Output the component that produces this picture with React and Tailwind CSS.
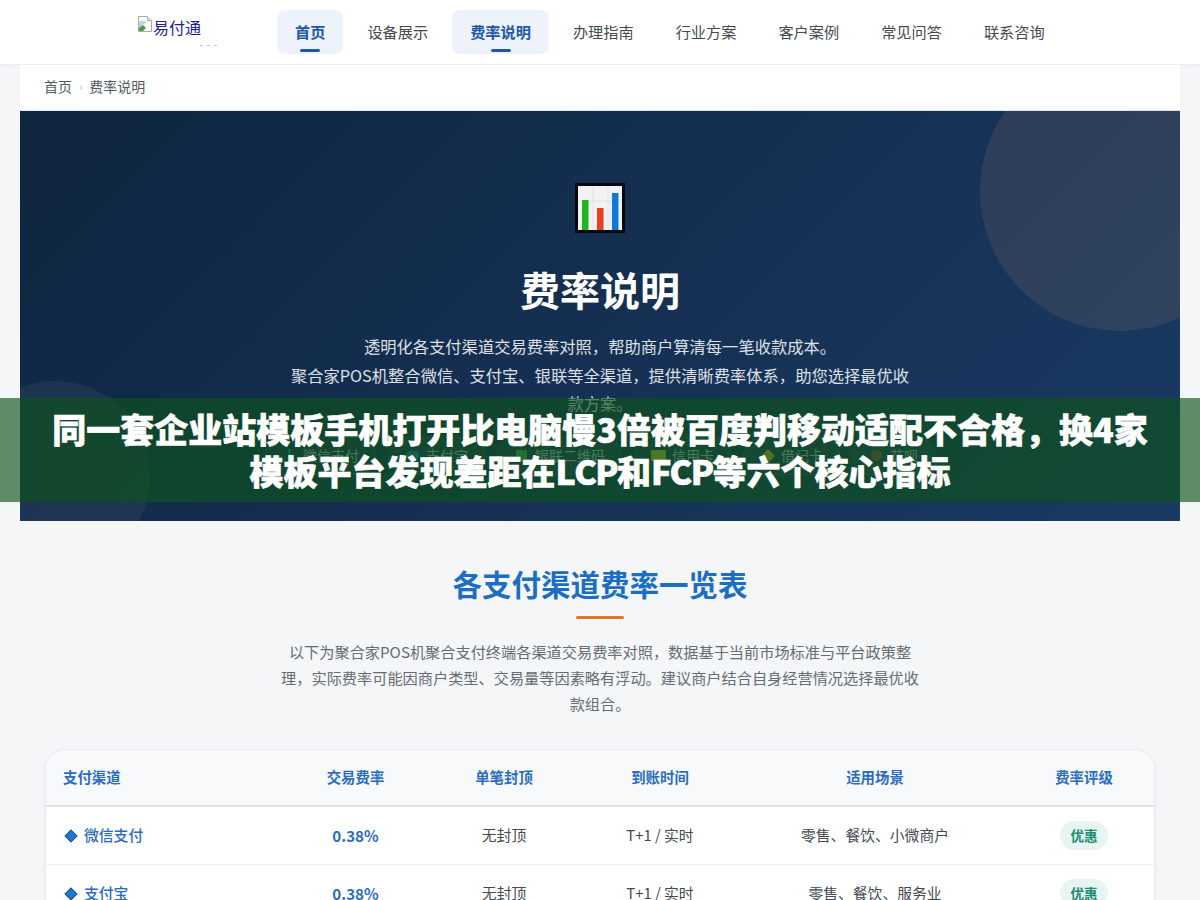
import { Heart } from 'lucide-react';

const font = '[font-family:"Noto_Sans_CJK_SC","Liberation_Sans",sans-serif]';

const navItems = [
  { label: '首页', active: true },
  { label: '设备展示' },
  { label: '费率说明', active: true },
  { label: '办理指南' },
  { label: '行业方案' },
  { label: '客户案例' },
  { label: '常见问答' },
  { label: '联系咨询' },
];

const rows = [
  { name: '微信支付', rate: '0.38%', cap: '无封顶', time: 'T+1 / 实时', scene: '零售、餐饮、小微商户', level: '优惠' },
  { name: '支付宝', rate: '0.38%', cap: '无封顶', time: 'T+1 / 实时', scene: '零售、餐饮、服务业', level: '优惠' },
];

const columns = ['支付渠道', '交易费率', '单笔封顶', '到账时间', '适用场景', '费率评级'];
const gridCols = 'grid grid-cols-[236px_147px_150px_162px_268px_150px]';

function BrokenImage() {
  return (
    <svg width="16" height="18" viewBox="0 0 16 18" className="shrink-0">
      <path d="M1.5 1.5h9l4 4v11h-13z" fill="#fff" stroke="#a9a9a9" />
      <path d="M10.5 1.5v4h4" fill="#e8e8e8" stroke="#a9a9a9" />
      <path d="M2 7c2-2 5-2 7 0l-6 6-1 0z" fill="#bcd4ee" />
      <path d="M2 16v-3l4-3 3 3-3 3z" fill="#4f9a3f" />
    </svg>
  );
}

function ChartIcon() {
  return (
    <svg width="50" height="50" viewBox="0 0 50 50">
      <rect width="50" height="50" fill="#05070c" />
      <rect x="3" y="3" width="44" height="44" fill="#f2f2f4" />
      <path d="M3 18h44M3 33h44M18 3v44M33 3v44" stroke="#e2e2e6" strokeWidth="1" />
      <rect x="7" y="17" width="6.5" height="30" fill="#22b51e" />
      <rect x="22" y="25" width="6.5" height="22" fill="#e8401c" />
      <rect x="37" y="10" width="6.5" height="37" fill="#0f78d8" />
    </svg>
  );
}

function Chip({ icon, children }) {
  return (
    <span className="flex items-center gap-[6px] h-[38px] px-4 rounded-full border border-white/10 bg-white/[0.04] text-[14px] text-white/70">
      <span className="w-[15px] flex justify-center">{icon}</span>
      {children}
    </span>
  );
}

export default function App() {
  return (
    <div className={`relative h-[900px] overflow-hidden bg-[#f4f6f8] ${font}`}>
      {/* Header */}
      <header className="h-[65px] bg-white border-b border-[#eceef1] shadow-[0_1px_4px_rgba(0,0,0,0.04)] flex items-start">
        <div className="w-[277px] shrink-0 pl-[137px] pt-[15px]">
          <div className="flex items-start text-[16px] leading-[24px] text-[#1f1f9a]">
            <BrokenImage />
            <span>易付通</span>
          </div>
          <div className="ml-[63px] mt-[6px] flex gap-[4px]">
            <span className="w-[3px] h-px bg-[#c4c8cc]" />
            <span className="w-[3px] h-px bg-[#c4c8cc]" />
            <span className="w-[3px] h-px bg-[#c4c8cc]" />
          </div>
        </div>
        <nav className="flex gap-[6px] pt-[10px]">
          {navItems.map((item) => (
            <a
              key={item.label}
              className={
                item.active
                  ? 'relative h-[44px] px-[18px] rounded-lg bg-[#edf2fb] text-[15.2px] font-semibold leading-[43px] text-[#2257a8]'
                  : 'h-[44px] px-[18px] rounded-lg text-[15.2px] leading-[43px] text-[#444a52]'
              }
            >
              {item.label}
              {item.active && (
                <span className="absolute left-1/2 -translate-x-1/2 bottom-[2px] w-5 h-[3px] rounded-sm bg-[#2257a8]" />
              )}
            </a>
          ))}
        </nav>
      </header>

      <main className="mx-5">
        {/* Breadcrumb */}
        <div className="h-[45px] bg-white pl-6 pb-[2px] flex items-center text-[14px] text-[#555b63]">
          <span>首页</span>
          <span className="mx-[7px] text-[11px] text-[#b5bac0]">›</span>
          <span>费率说明</span>
        </div>

        {/* Hero */}
        <section className="relative h-[411px] overflow-hidden border-t border-[#dfe5ea] bg-[linear-gradient(135deg,#0f2540_0%,#1a3a64_100%)] flex flex-col items-center pt-[72px]">
          <div className="absolute left-[960px] top-[-60px] w-[280px] h-[280px] rounded-full bg-[#ffb060]/10" />
          <div className="absolute left-[-60px] top-[270px] w-[190px] h-[190px] rounded-full bg-white/5" />
          <ChartIcon />
          <h1 className="mt-[26px] text-[40px] font-bold leading-[60px] text-white">费率说明</h1>
          <p className="mt-[13px] w-[620px] text-center text-[16.3px] leading-[28.6px] text-white/85">
            透明化各支付渠道交易费率对照，帮助商户算清每一笔收款成本。
            <br />
            聚合家POS机整合微信、支付宝、银联等全渠道，提供清晰费率体系，助您选择最优收款方案。
          </p>
          <div className="mt-[19px] flex gap-3">
            <Chip icon={<span className="block w-[3px] h-[13px] bg-[#0d8f8f]" />}>微信支付</Chip>
            <Chip icon={<Heart size={14} fill="#1b7fd0" stroke="#1b7fd0" />}>支付宝</Chip>
            <Chip icon={<span className="block w-[11px] h-[11px] bg-[#3fa35a]" />}>银联二维码</Chip>
            <Chip icon={<span className="block w-[15px] h-[11px] rounded-[1px] bg-[#c9b53a]" />}>信用卡</Chip>
            <Chip icon={<span className="block w-[10px] h-[10px] rotate-45 bg-[#c9a92f]" />}>借记卡</Chip>
            <Chip icon={<span className="block w-[11px] h-[11px] rounded-full bg-[#8f4a40]" />}>花呗</Chip>
          </div>
        </section>

        {/* Rate section */}
        <section className="px-[25px] pt-[38px] flex flex-col items-center">
          <h2 className="text-[29.5px] font-bold leading-[48px] text-[#1a6fc4]">各支付渠道费率一览表</h2>
          <div className="mt-[9px] w-12 h-[3px] rounded-sm bg-[#e8722a]" />
          <p className="mt-[19px] w-[640px] text-center text-[15.2px] leading-[26px] text-[#666c74]">
            以下为聚合家POS机聚合支付终端各渠道交易费率对照，数据基于当前市场标准与平台政策整理，实际费率可能因商户类型、交易量等因素略有浮动。建议商户结合自身经营情况选择最优收款组合。
          </p>

          <div className="mt-[33px] w-[1110px] shrink-0 rounded-[20px] border border-[#e6e9ee] bg-white overflow-hidden shadow-[0_2px_10px_rgba(0,0,0,0.03)]">
            <div className={`${gridCols} h-[57px] items-center bg-[#f7f9fb] border-b-2 border-[#e2e6ec] pb-px text-[14.4px] font-semibold text-[#2b6cc0]`}>
              {columns.map((c, i) => (
                <div key={c} className={i === 0 ? 'pl-[17px]' : 'text-center'}>
                  {c}
                </div>
              ))}
            </div>
            {rows.map((r) => (
              <div key={r.name} className={`${gridCols} h-[58px] items-center border-b border-[#eef0f3] text-[14.8px] text-[#444a52]`}>
                <div className="pl-[18px] flex items-center gap-[6px] font-medium text-[#2b6cc0]">
                  <svg width="14" height="14" viewBox="0 0 14 14" className="shrink-0">
                    <path d="M7 .8 13.2 7 7 13.2.8 7z" fill="#1a76d2" stroke="#123a5e" strokeWidth="1" />
                  </svg>
                  {r.name}
                </div>
                <div className="text-center text-[15.2px] font-semibold text-[#2b6cc0]">{r.rate}</div>
                <div className="text-center">{r.cap}</div>
                <div className="text-center">{r.time}</div>
                <div className="text-center">{r.scene}</div>
                <div className="flex justify-center">
                  <span className="h-[29px] px-[10px] rounded-full bg-[#e6f5f1] text-[13.6px] font-semibold leading-[29px] text-[#1f8a70]">
                    {r.level}
                  </span>
                </div>
              </div>
            ))}
          </div>
        </section>
      </main>

      {/* Title overlay */}
      <div className="absolute left-0 top-[398px] w-full h-[104px] bg-[rgba(14,83,28,0.65)] flex items-center justify-center text-center">
        <div className="text-[34px] font-black leading-[42px] text-white [-webkit-text-stroke:0.6px_white]">
          同一套企业站模板手机打开比电脑慢3倍被百度判移动适配不合格，换4家
          <br />
          模板平台发现差距在<span className="tracking-[-1.6px]">LCP</span>和<span className="tracking-[-1.6px]">FCP</span>等六个核心指标
        </div>
      </div>
    </div>
  );
}
